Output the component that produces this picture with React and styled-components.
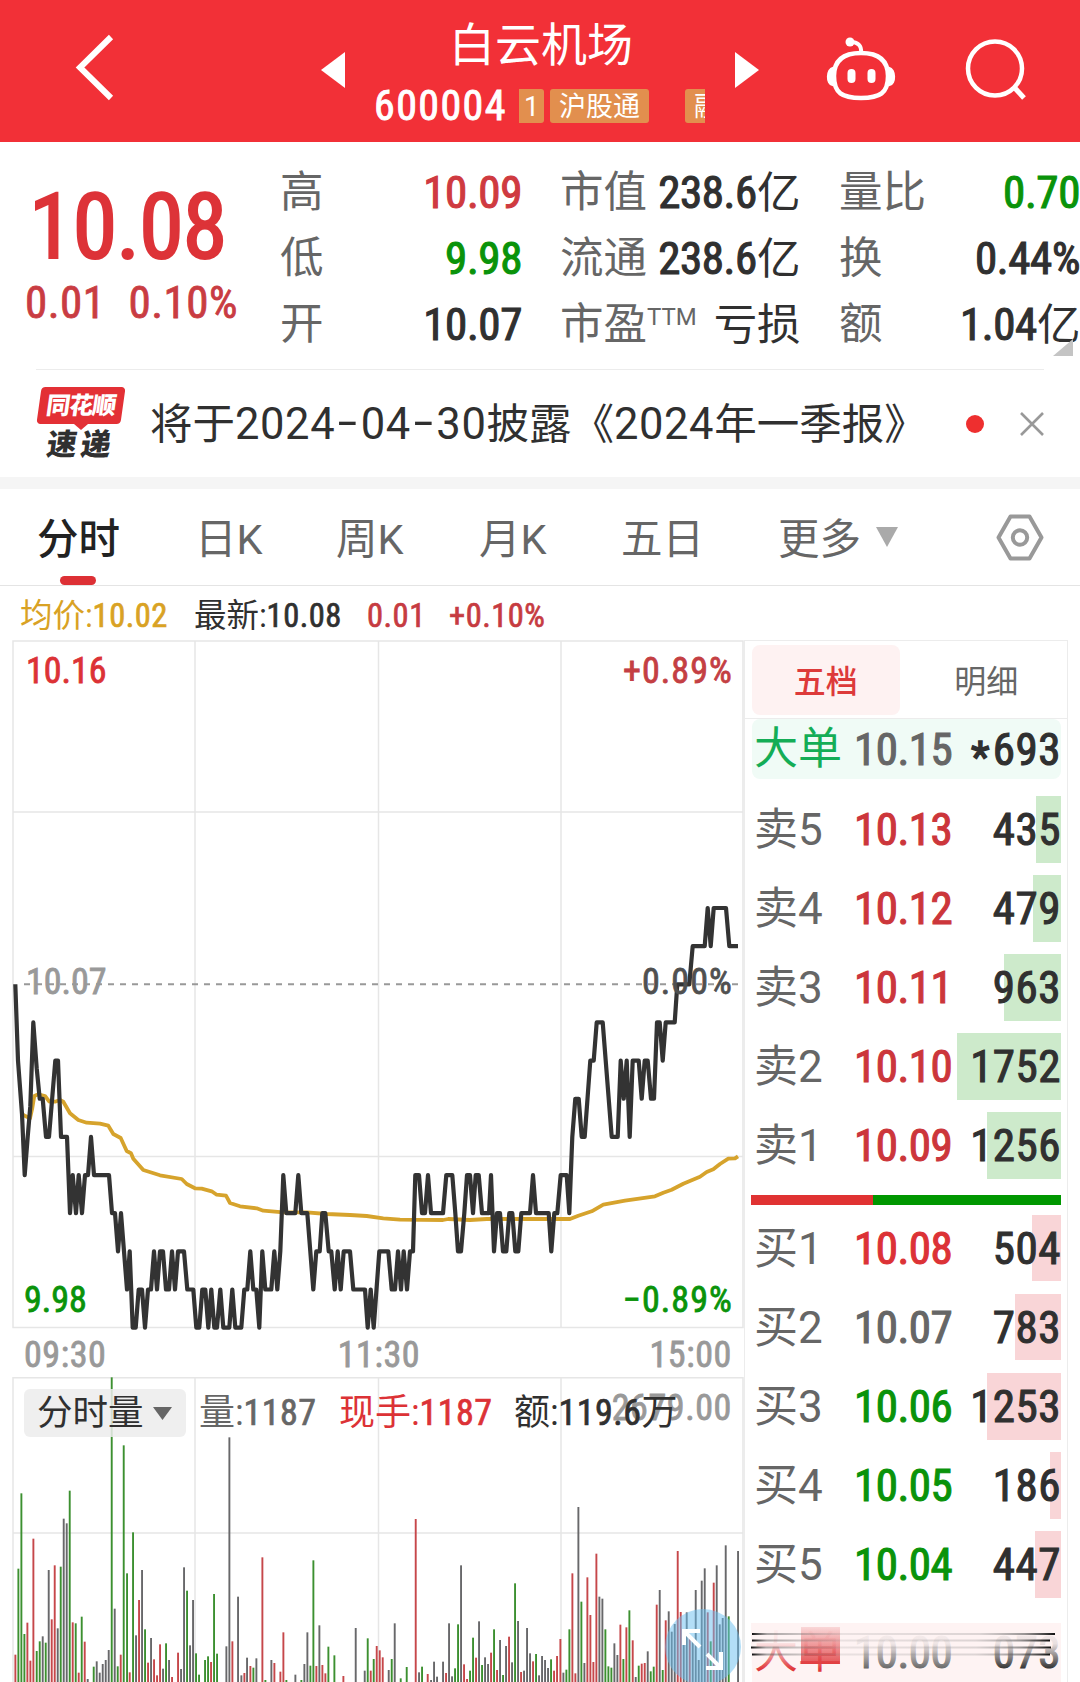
import React from 'react';
import styled, { createGlobalStyle } from 'styled-components';

const RED = '#dc3236';
const GREEN = '#0a930a';
const DARK = '#303030';
const GREY = '#666666';

const NUM = '"Roboto Condensed", "Noto Sans CJK SC", sans-serif';
const TEXT = 'Roboto, "Noto Sans CJK SC", sans-serif';

// Intraday price, [x, ticks below the previous close]
const price = [
  [15.3, 0], [18, 2], [22, 3.4], [24.7, 5], [27.7, 4], [30.3, 3.2], [33.3, 1], [36.7, 2.2],
  [39.7, 3], [42.7, 3], [46, 4], [49, 4], [55.3, 2], [58, 2], [61, 4], [67, 4], [70, 6],
  [72.7, 5], [76, 6], [78.7, 5], [82, 6], [85, 5], [88, 5], [91, 4], [94, 5], [109, 5],
  [112, 6], [115, 6], [118, 7], [121, 6], [124, 7], [127, 8], [129.7, 7], [132.7, 9],
  [135.7, 9], [138.7, 8], [142, 8], [145, 9], [148, 8], [151, 8], [154, 7], [157, 8],
  [160, 7], [163, 7], [166, 8], [169, 8], [172, 7], [175, 8], [178, 7], [184, 7], [187.3, 8],
  [193.3, 8], [196.3, 9], [199.3, 9], [202.3, 8], [205.3, 8], [208.3, 9], [211.3, 8],
  [214.3, 9], [217, 9], [220.3, 8], [223.3, 9], [229.3, 9], [232.3, 8], [235.3, 9],
  [241.3, 9], [244.3, 8], [247.3, 8], [250.3, 7], [253.3, 8], [256.3, 8], [259.3, 9],
  [262.3, 7], [265.3, 8], [271.3, 8], [274.3, 7], [277.3, 8], [280.3, 7], [283.3, 5],
  [286.3, 6], [295.3, 6], [298.3, 5], [301.3, 6], [307.3, 6], [310.3, 7], [313.3, 8],
  [316.3, 7], [319.7, 7], [322.3, 6], [325.3, 6], [328.7, 7], [331.3, 7], [334.7, 8],
  [337.7, 7], [340.7, 8], [343.7, 7], [350, 7], [353.3, 8], [365, 8], [367.7, 9],
  [370.7, 8], [373.7, 9], [376.5, 8], [379.3, 7], [388.3, 7], [391.7, 8], [395, 8],
  [398, 7], [401, 8], [403.7, 7], [407, 8], [410, 7], [413, 7], [415.3, 5], [419, 5],
  [422, 6], [425, 6], [428, 5], [431, 6], [443, 6], [446.3, 5], [452.3, 5], [455.3, 6],
  [458, 7], [461, 7], [464.3, 6], [467, 5], [470, 5], [473, 6], [475.7, 5], [478.7, 5],
  [482, 6], [489, 6], [491, 5], [494, 7], [497, 6], [500, 6], [503, 7], [506.3, 7],
  [509.3, 6], [512.3, 6], [515.3, 7], [518.3, 7], [521.3, 6], [530, 6], [533, 5], [536, 6],
  [548.7, 6], [551.3, 7], [554.3, 6], [557.3, 6], [560.7, 5], [566.7, 5], [569.3, 6],
  [572.3, 4], [575.3, 3], [578.7, 3], [581.7, 4], [584.7, 4], [590.3, 2], [593.7, 2],
  [596.7, 1], [602.7, 1], [605.7, 2], [611.7, 4], [617.7, 4], [620.7, 2], [623.7, 3],
  [626.7, 2], [629.7, 4], [632.7, 2], [638.7, 2], [641.7, 3], [644.7, 2], [647.7, 2],
  [651, 3], [654, 3], [657, 1], [659.7, 1], [662.7, 2], [665.7, 1], [674.7, 1], [677.3, 0],
  [689.3, 0], [692.7, -1], [704.7, -1], [707.7, -2], [710.7, -1], [713.7, -2], [726, -2],
  [729.3, -1], [738, -1],
];

// Average price line, page pixels
const average = [
  [22, 1114], [25.3, 1116], [30, 1118.3], [32.3, 1108], [34.3, 1096], [38.3, 1094.3],
  [45, 1096], [49.3, 1101.7], [55, 1101.7], [60, 1100], [63.3, 1101.7], [70, 1113.3],
  [78.3, 1120], [86.7, 1122.7], [100, 1123.7], [108.3, 1125.7], [113.3, 1134], [120.7, 1138],
  [126.7, 1151], [131, 1153.3], [133.3, 1158.7], [143.3, 1170], [160, 1175.3], [181.7, 1179],
  [186.7, 1184], [195, 1188.3], [201.7, 1188.7], [211.7, 1191.3], [216.7, 1194.7],
  [226, 1195.7], [230, 1203], [240, 1206.3], [256.7, 1208.3], [263.3, 1210.7], [283.3, 1212.3],
  [306.7, 1212.3], [326.7, 1214], [350, 1215], [366.7, 1216], [383.3, 1218.3], [400, 1219.7],
  [443, 1220], [448.3, 1219], [470, 1220], [486.7, 1219], [570, 1219], [578.3, 1215.7],
  [591.7, 1211.3], [603.3, 1204.7], [625, 1200.7], [655, 1196.3], [663.3, 1192.7],
  [671.7, 1189.7], [683.3, 1183.7], [700, 1176.7], [706.7, 1172], [713.3, 1169.3],
  [720, 1164], [728.3, 1158.7], [735, 1158.3], [738, 1156.3],
];

// Volume bars as "x,top,colour", in thirds of a pixel from the top of the volume area
const volume = `46,884,r 55,626,g 64,400,g 73,822,g 82,788,r 91,902,r 100,536,r 110,873,g
119,844,g 128,829,k 137,848,g 146,630,k 155,778,r 164,616,r 173,805,k 182,620,g 191,476,k
200,490,k 209,392,g 218,787,r 227,790,g 236,938,r 245,770,g 254,845,r 263,957,k 281,920,g
290,904,k 299,938,k 308,912,k 317,900,k 326,870,k 335,52,g 344,746,k 353,919,g 362,884,r
371,256,g 381,640,g 389,937,r 399,517,g 408,826,k 417,720,r 426,630,k 435,808,g 444,908,r
453,834,k 462,898,r 471,946,r 480,853,r 489,926,k 498,850,g 507,900,k 516,951,r 534,878,r
543,927,k 552,622,k 561,692,g 570,856,k 579,720,k 588,880,g 597,944,g 615,900,g 624,889,g
633,906,r 642,702,g 651,881,g 679,859,k 688,232,k 697,844,r 714,710,k 724,946,k 733,939,r
741,893,k 751,918,r 760,923,g 769,895,k 787,592,r 796,960,g 814,900,k 823,909,r 841,935,r
850,817,r 859,960,g 886,944,k 904,960,g 913,912,k 922,817,k 931,917,g 940,601,g 949,918,r
958,796,k 967,915,r 976,940,r 985,860,g 1003,886,g 1030,948,r 1067,804,k 1094,932,k
1103,835,g 1112,932,r 1121,897,g 1130,858,r 1139,871,r 1148,892,r 1166,930,k 1175,897,g
1184,790,k 1202,955,g 1220,921,g 1247,477,r 1257,937,k 1266,920,g 1283,942,r 1293,960,k
1302,905,k 1311,950,k 1329,905,k 1338,939,r 1347,790,k 1356,949,k 1365,925,g 1374,793,g
1383,616,k 1392,913,r 1401,957,r 1410,932,g 1419,833,g 1428,893,r 1437,784,k 1446,915,g
1455,892,k 1464,912,k 1473,878,r 1482,808,g 1491,930,r 1500,840,k 1509,945,g 1518,858,k
1527,830,r 1536,907,k 1545,670,g 1554,783,k 1563,936,r 1572,932,k 1581,804,k 1590,880,k
1599,904,r 1608,882,g 1617,946,k 1626,888,k 1635,900,k 1644,924,k 1653,898,g 1662,932,r
1671,888,r 1681,837,r 1690,938,k 1699,929,g 1708,808,g 1717,640,r 1726,940,r 1735,441,k
1744,725,g 1753,909,k 1762,652,r 1771,765,r 1780,906,r 1789,581,r 1798,710,k 1807,716,k
1816,808,g 1825,919,g 1834,923,g 1843,850,k 1852,885,k 1861,794,r 1870,897,g 1879,802,r
1888,751,g 1898,841,r 1907,951,k 1916,917,g 1925,911,r 1934,909,r 1943,874,k 1952,934,g
1961,920,g 1970,734,r 1979,690,k 1988,930,g 1997,781,r 2006,754,k 2015,815,k 2024,792,k
2033,573,r 2042,756,r 2051,830,k 2060,757,k 2069,832,r 2078,840,k 2087,690,k 2096,900,k
2105,662,k 2114,625,k 2123,757,r 2132,844,g 2141,668,r 2150,616,k 2159,793,k 2168,774,k
2177,556,k 2186,769,g 2214,573,k`
  .split(/\s+/)
  .map((item) => item.split(','));

const barColors = { r: '#c6474a', g: '#3c9030', k: '#68686a' };

const asks = [
  { label: '卖5', price: '10.13', qty: '435', bar: 25 },
  { label: '卖4', price: '10.12', qty: '479', bar: 28 },
  { label: '卖3', price: '10.11', qty: '963', bar: 57 },
  { label: '卖2', price: '10.10', qty: '1752', bar: 104 },
  { label: '卖1', price: '10.09', qty: '1256', bar: 74 },
];

const bids = [
  { label: '买1', price: '10.08', qty: '504', bar: 29, color: RED },
  { label: '买2', price: '10.07', qty: '783', bar: 46, color: GREY },
  { label: '买3', price: '10.06', qty: '1253', bar: 74, color: GREEN },
  { label: '买4', price: '10.05', qty: '186', bar: 11, color: GREEN },
  { label: '买5', price: '10.04', qty: '447', bar: 26, color: GREEN },
];

const yOf = (tick) => 344.3 + tick * 38.15;

const TopBar = () => (
  <Header>
    <BackButton>
      <svg width="40" height="68" viewBox="0 0 40 68" fill="none">
        <path d="M36 3 L5 33.5 L36 64" stroke="#fff" strokeWidth="6" />
      </svg>
    </BackButton>
    <Arrow viewBox="0 0 24 36">
      <path d="M24 0 V36 L0 18 Z" fill="#fff" />
    </Arrow>
    <Stock>
      <StockName>白云机场</StockName>
      <StockMeta>
        <Code>600004</Code>
        <Tag $w="25px" $radius="0 3px 3px 0">1</Tag>
        <Tag $w="99px" $radius="3px" $gap="6px">沪股通</Tag>
        <Tag $w="20px" $radius="3px 0 0 3px" $gap="36px" $cut>融</Tag>
      </StockMeta>
    </Stock>
    <Arrow viewBox="0 0 24 36">
      <path d="M0 0 V36 L24 18 Z" fill="#fff" />
    </Arrow>
    <Robot viewBox="0 0 72 66" fill="none" stroke="#fff">
      <path
        d="M36 17 C54 17 63 25 63 40 C63 57 55 62 36 62 C17 62 9 57 9 40 C9 25 18 17 36 17 Z"
        strokeWidth="4.5"
      />
      <path d="M36 17 C37 9 32 6 26 6" strokeWidth="4" />
      <circle cx="25" cy="6" r="4.5" fill="#fff" stroke="none" />
      <path d="M8 32 C2 33 1 48 8 49 Z M64 32 C70 33 71 48 64 49 Z" fill="#fff" strokeWidth="2.5" />
      <path d="M26.500 37 V43 M46.500 37 V43" strokeWidth="8" strokeLinecap="round" />
    </Robot>
    <Search viewBox="0 0 62 62" fill="none" stroke="#fff">
      <circle cx="30" cy="30.500" r="27" strokeWidth="4.5" />
      <path d="M48.500 48.500 L59 60" strokeWidth="5" />
    </Search>
  </Header>
);

const Quote = () => (
  <QuoteBox>
    <Current>
      <BigPrice>10.08</BigPrice>
      <Change>
        <span>0.01</span>
        <span>0.10%</span>
      </Change>
    </Current>
    <StatColumn $w="242px" $gap="38px">
      <Stat>高<Value $color="#cf3a40">10.09</Value></Stat>
      <Stat>低<Value $color={GREEN}>9.98</Value></Stat>
      <Stat>开<Value>10.07</Value></Stat>
    </StatColumn>
    <StatColumn $w="240px" $gap="39px">
      <Stat>市值<Value>238.6<Han>亿</Han></Value></Stat>
      <Stat>流通<Value>238.6<Han>亿</Han></Value></Stat>
      <Stat>市盈<Ttm>TTM</Ttm><Value><Han>亏损</Han></Value></Stat>
    </StatColumn>
    <StatColumn $w="241px" $gap="0px">
      <Stat>量比<Value $color={GREEN}>0.70</Value></Stat>
      <Stat>换<Value>0.44%</Value></Stat>
      <Stat>额<Value>1.04<Han>亿</Han></Value></Stat>
    </StatColumn>
    <Corner viewBox="0 0 20 17">
      <path d="M20 0 V17 H0 Z" fill="#c4c4c4" />
    </Corner>
  </QuoteBox>
);

const News = () => (
  <NewsRow>
    <Brand>
      <BrandTop>
        <span>同花顺</span>
      </BrandTop>
      <BrandTip viewBox="0 0 14 6">
        <path d="M0 0 H14 L7 6 Z" fill="#e33035" />
      </BrandTip>
      <BrandBottom>速递</BrandBottom>
    </Brand>
    <Headline>
      将于<Digits>2024<Dash>-</Dash>04<Dash>-</Dash>30</Digits>披露《<Digits>2024</Digits>年一季报》
    </Headline>
    <Dot />
    <Close viewBox="0 0 24 24">
      <path d="M1 1 L23 23 M23 1 L1 23" stroke="#999" strokeWidth="2.6" />
    </Close>
  </NewsRow>
);

const Periods = () => (
  <Tabs>
    <Tab $w="143px" $active>分时</Tab>
    <Tab $w="141px">日K</Tab>
    <Tab $w="143px">周K</Tab>
    <Tab $w="142px">月K</Tab>
    <Tab $w="157px">五日</Tab>
    <Tab $w="113px">更多</Tab>
    <Caret viewBox="0 0 22 20">
      <path d="M0 0 H22 L11 20 Z" fill="#aaa" />
    </Caret>
    <Settings viewBox="0 0 48 47" fill="none" stroke="#999" strokeWidth="4">
      <path d="M14.500 2.500 H33.500 L45.500 23.500 L33.500 44.500 H14.500 L2.500 23.500 Z" strokeLinejoin="round" />
      <circle cx="24" cy="23.500" r="7.200" />
    </Settings>
  </Tabs>
);

const PriceChart = () => (
  <ChartSvg width="744" height="737" viewBox="0 0 744 737">
    <path
      d="M13 1 H743 V687.500 H13 Z M195 1 V687.500 M378.500 1 V687.500 M561 1 V687.500 M13 172 H743 M13 516.500 H743"
      fill="none"
      stroke="#e6e6e6"
      strokeWidth="1.5"
    />
    <path d="M24 344.300 H738" stroke="#999" strokeWidth="2" strokeDasharray="6 6" />
    <ChartText x="26" y="353.500" $color="#999">10.07</ChartText>
    <polyline
      points={average.map(([x, y]) => `${x},${y - 640}`).join(' ')}
      fill="none"
      stroke="#d6a32c"
      strokeWidth="3.8"
      strokeLinejoin="round"
    />
    <polyline
      points={price.map(([x, t]) => `${x},${yOf(t)}`).join(' ')}
      fill="none"
      stroke="#333"
      strokeWidth="4.2"
      strokeLinejoin="round"
    />
    <ChartText x="26" y="43" $color={RED}>10.16</ChartText>
    <ChartText x="733" y="43" $color="#c43f43" $spacing="1.1px" textAnchor="end">+0.89%</ChartText>
    <ChartText x="733" y="353.500" $color="#505050" $spacing="1.1px" textAnchor="end">0.00%</ChartText>
    <ChartText x="24" y="671.500" $color={GREEN}>9.98</ChartText>
    <ChartText x="733" y="671.500" $color={GREEN} $spacing="1.1px" textAnchor="end">−0.89%</ChartText>
    <ChartText x="24" y="726.500" $color="#999" $spacing="0.6px">09:30</ChartText>
    <ChartText x="379" y="726.500" $color="#999" $spacing="0.6px" textAnchor="middle">11:30</ChartText>
    <ChartText x="732" y="726.500" $color="#999" $spacing="0.6px" textAnchor="end">15:00</ChartText>
  </ChartSvg>
);

const VolumeChart = () => (
  <VolumeArea>
    <ChartSvg width="744" height="305" viewBox="0 1377 744 305">
      <path
        d="M13 1682 V1377.800 H743 V1682 M195 1377.500 V1682 M378.500 1377.500 V1682 M561 1377.500 V1682 M13 1533 H743"
        fill="none"
        stroke="#e6e6e6"
        strokeWidth="1.5"
      />
      {volume.map(([x, top, c]) => (
        <rect
          key={x}
          x={x / 3 - 0.9}
          y={1360 + top / 3}
          width="1.9"
          height={322 - top / 3}
          fill={barColors[c]}
        />
      ))}
      <ChartText x="732" y="1420" $color="#999" $spacing="0.6px" textAnchor="end">2679.00</ChartText>
    </ChartSvg>
    <VolumeLegend>
      <Picker>
        分时量
        <svg width="19" height="13" viewBox="0 0 19 13">
          <path d="M0 0 H19 L9.500 13 Z" fill="#666" />
        </svg>
      </Picker>
      <Item $w="140px" $color={GREY}>量:<b>1187</b></Item>
      <Item $w="175px" $color={RED}>现手:<b>1187</b></Item>
      <Item $w="170px" $color={DARK}>额:<b>119.6</b>万</Item>
    </VolumeLegend>
    <Expand viewBox="0 0 76 76" fill="none" stroke="#fff" strokeWidth="4">
      <circle cx="38" cy="38" r="38" fill="rgba(104, 190, 240, 0.5)" stroke="none" />
      <path d="M19 36 V22 H35 M20 23 L35 38" />
      <path d="M41 59 H56 V43 M55 58 L42 45" />
    </Expand>
  </VolumeArea>
);

const Level = ({ row, color, tint }) => (
  <LevelRow>
    <LevelBar $tint={tint} style={{ width: row.bar }} />
    <LevelLabel>{row.label}</LevelLabel>
    <LevelPrice $color={color}>{row.price}</LevelPrice>
    <LevelQty>{row.qty}</LevelQty>
  </LevelRow>
);

const OrderBook = () => (
  <Book>
    <BookTabs>
      <BookTab $active>五档</BookTab>
      <BookTab>明细</BookTab>
    </BookTabs>
    <BigOrder>
      <LevelLabel $color="#14ad56">大单</LevelLabel>
      <LevelPrice $color={GREY}>10.15</LevelPrice>
      <LevelQty><Star>*</Star>693</LevelQty>
    </BigOrder>
    <Levels>
      {asks.map((row) => (
        <Level key={row.label} row={row} color="#cc363b" tint="#cdeacb" />
      ))}
    </Levels>
    <Ratio>
      <RatioPart $w="122px" $color="#e03232" />
      <RatioPart $w="188px" $color="#009700" />
    </Ratio>
    <Levels>
      {bids.map((row) => (
        <Level key={row.label} row={row} color={row.color} tint="#f9d5d7" />
      ))}
    </Levels>
    <BottomOrder>
      <LevelLabel $color="#e0393c">大单</LevelLabel>
      <LevelPrice $color={GREY}>10.00</LevelPrice>
      <LevelQty>073</LevelQty>
      <Streaks viewBox="0 0 310 46">
        <defs>
          <linearGradient id="veil" x1="0" y1="0" x2="0" y2="1">
            <stop offset="0" stopColor="#fef3f3" />
            <stop offset="0.45" stopColor="#fef3f3" stopOpacity="0.9" />
            <stop offset="1" stopColor="#fef3f3" stopOpacity="0" />
          </linearGradient>
          <linearGradient id="block" x1="0" y1="0" x2="0" y2="1">
            <stop offset="0" stopColor="#e0393c" stopOpacity="0.15" />
            <stop offset="1" stopColor="#e0393c" stopOpacity="0.85" />
          </linearGradient>
          <linearGradient id="streak">
            <stop offset="0" stopColor="#111" />
            <stop offset="0.05" stopColor="#555" stopOpacity="0.5" />
            <stop offset="0.3" stopColor="#777" stopOpacity="0.15" />
            <stop offset="0.75" stopColor="#777" stopOpacity="0.25" />
            <stop offset="0.9" stopColor="#555" stopOpacity="0.6" />
            <stop offset="1" stopColor="#111" />
          </linearGradient>
        </defs>
        <rect width="310" height="46" fill="url(#veil)" />
        <rect x="50" y="4" width="39" height="37" fill="url(#block)" />
        <rect x="1" y="10" width="303" height="2" fill="url(#streak)" />
        <rect x="1" y="16.500" width="298" height="2" fill="url(#streak)" />
        <rect x="0" y="23.500" width="300" height="2" fill="url(#streak)" />
        <rect x="1" y="30.500" width="298" height="2" fill="url(#streak)" />
      </Streaks>
    </BottomOrder>
  </Book>
);

const App = () => {
  return (
    <Page>
      <GlobalStyle />
      <TopBar />
      <Quote />
      <News />
      <Periods />
      <Legend>
        <Item $w="174px" $color="#d9a224">均价:<b>10.02</b></Item>
        <Item $w="173px" $color={DARK}>最新:<b>10.08</b></Item>
        <Item $w="82px" $color="#c63b41"><b>0.01</b></Item>
        <Item $w="110px" $color="#c63b41"><b>+0.10%</b></Item>
      </Legend>
      <Board>
        <Charts>
          <PriceChart />
          <VolumeChart />
        </Charts>
        <OrderBook />
      </Board>
    </Page>
  );
};

// Styled Components
const GlobalStyle = createGlobalStyle`
  * {
    box-sizing: border-box;
  }
  body {
    margin: 0;
    background: #fff;
  }
  svg {
    display: block;
    flex-shrink: 0;
  }
`;

const Page = styled.div`
  width: 1080px;
  height: 1682px;
  overflow: hidden;
  background: #fff;
  color: ${DARK};
  font-family: ${TEXT};
  white-space: nowrap;
`;

const Header = styled.header`
  display: flex;
  height: 142px;
  background: #f23037;
  color: #fff;
`;

const BackButton = styled.div`
  width: 321px;
  padding: 34px 0 0 75px;
`;

const Arrow = styled.svg`
  width: 24px;
  height: 36px;
  margin-top: 52px;
`;

const Stock = styled.div`
  width: 390px;
  padding-top: 14px;
`;

const StockName = styled.div`
  height: 60px;
  padding-left: 2px;
  font-size: 46px;
  line-height: 62px;
  text-align: center;
`;

const StockMeta = styled.div`
  display: flex;
  align-items: center;
  height: 34px;
  margin-top: 15px;
  padding-left: 29px;
`;

const Code = styled.div`
  width: 145px;
  font-family: ${NUM};
  font-size: 42px;
  font-weight: 400;
  line-height: 36px;
  letter-spacing: 1.4px;
  -webkit-text-stroke: 0.9px;
`;

const Tag = styled.div`
  width: ${(p) => p.$w};
  height: 34px;
  margin-left: ${(p) => p.$gap || 0};
  padding-left: ${(p) => (p.$cut ? '9px' : 0)};
  border-radius: ${(p) => p.$radius};
  background: #e28f4e;
  overflow: hidden;
  font-size: 27px;
  line-height: 36px;
  text-align: ${(p) => (p.$cut ? 'left' : 'center')};
`;

const Robot = styled.svg`
  width: 72px;
  height: 66px;
  margin: 36px 0 0 66px;
`;

const Search = styled.svg`
  width: 62px;
  height: 62px;
  margin: 38px 0 0 68px;
`;

const QuoteBox = styled.section`
  position: relative;
  display: flex;
  height: 227px;
  padding-top: 17px;
`;

const Current = styled.div`
  width: 280px;
  padding: 16px 0 0 25px;
  color: #dd3338;
  font-family: ${NUM};
`;

const BigPrice = styled.div`
  padding-left: 4px;
  font-size: 90px;
  font-weight: 400;
  line-height: 105px;
  letter-spacing: -0.8px;
  -webkit-text-stroke: 2.2px;
`;

const Change = styled.div`
  display: flex;
  gap: 23px;
  color: #c93c42;
  font-size: 45px;
  line-height: 46px;
  letter-spacing: 0.5px;
  -webkit-text-stroke: 0.8px;
`;

const StatColumn = styled.div`
  width: ${(p) => p.$w};
  margin-right: ${(p) => p.$gap};
`;

const Stat = styled.div`
  display: flex;
  height: 66px;
  color: ${GREY};
  font-size: 43.5px;
  line-height: 68px;
`;

const Value = styled.span`
  margin-left: auto;
  color: ${(p) => p.$color || DARK};
  font-family: ${NUM};
  font-size: 45px;
  font-weight: 400;
  line-height: 67px;
  letter-spacing: -0.4px;
  -webkit-text-stroke: 1.1px;
`;

const Han = styled.span`
  font-size: 43.5px;
  -webkit-text-stroke: 0;
`;

const Ttm = styled.span`
  font-size: 24px;
  line-height: 52px;
`;

const Corner = styled.svg`
  position: absolute;
  left: 1053px;
  bottom: 13px;
  width: 20px;
  height: 17px;
`;

const NewsRow = styled.section`
  display: flex;
  align-items: center;
  height: 108px;
  margin-left: 36px;
  margin-right: 36px;
  border-top: 1.5px solid #ececec;
`;

const Brand = styled.div`
  display: flex;
  flex-direction: column;
  align-items: center;
  width: 114px;
  padding-right: 25px;
  height: 73px;
`;

const BrandTop = styled.div`
  width: 84px;
  height: 37px;
  border-radius: 4px;
  background: #e33035;
  color: #fff;
  font-size: 24px;
  font-weight: 900;
  line-height: 38px;
  text-align: center;
  transform: skewX(-8deg);

  span {
    letter-spacing: -1px;
  }
`;

const BrandTip = styled.svg`
  width: 14px;
  height: 6px;
`;

const BrandBottom = styled.div`
  font-size: 30px;
  font-weight: 900;
  line-height: 29px;
  letter-spacing: 4px;
  transform: skewX(-8deg);
`;

const Headline = styled.div`
  width: 816px;
  font-size: 42.5px;
  line-height: 60px;
  padding-top: 3px;
`;

const Digits = styled.span`
  font-size: 43.5px;
  letter-spacing: 0.6px;
`;

const Dash = styled.span`
  display: inline-block;
  width: 25.5px;
  text-align: center;
  transform: translateY(-2px) scaleX(1.6);
`;

const Dot = styled.div`
  width: 18px;
  height: 18px;
  border-radius: 50%;
  background: #ee2f2f;
`;

const Close = styled.svg`
  width: 24px;
  height: 24px;
  margin-left: 36px;
`;

const Tabs = styled.nav`
  display: flex;
  align-items: center;
  height: 109px;
  padding-left: 37px;
  border-top: 12px solid #f5f5f5;
  border-bottom: 1.5px solid #e4e4e4;
`;

const Tab = styled.div`
  position: relative;
  width: ${(p) => p.$w};
  height: 96px;
  padding-left: ${(p) => (p.$active ? 0 : '15px')};
  color: ${(p) => (p.$active ? '#222' : GREY)};
  font-size: 41.5px;
  font-weight: ${(p) => (p.$active ? 500 : 400)};
  line-height: 102px;

  &::after {
    content: '';
    display: ${(p) => (p.$active ? 'block' : 'none')};
    position: absolute;
    left: 23px;
    bottom: 0;
    width: 36px;
    height: 9px;
    border-radius: 5px;
    background: #dd3035;
  }
`;

const Caret = styled.svg`
  width: 22px;
  height: 20px;
`;

const Settings = styled.svg`
  width: 48px;
  height: 47px;
  margin-left: auto;
  margin-right: 36px;
`;

const Legend = styled.div`
  display: flex;
  align-items: center;
  height: 54px;
  padding: 6px 0 0 20px;
  font-size: 32.5px;
`;

const Item = styled.div`
  width: ${(p) => p.$w};
  height: 40px;
  color: ${(p) => p.$color};
  font-family: ${NUM};
  font-weight: 400;
  line-height: 40px;

  b {
    font-weight: 400;
    letter-spacing: 0.5px;
    -webkit-text-stroke: 0.7px;
  }
`;

const Board = styled.div`
  display: flex;
  height: 1042px;
`;

const Charts = styled.div`
  width: 744px;
`;

const ChartSvg = styled.svg`
  overflow: hidden;
`;

const ChartText = styled.text`
  font-family: ${NUM};
  font-size: 36px;
  letter-spacing: ${(p) => p.$spacing || 0};
  fill: ${(p) => p.$color};
  stroke: ${(p) => p.$color};
  stroke-width: 0.8px;
`;

const VolumeArea = styled.div`
  position: relative;
`;

const VolumeLegend = styled.div`
  position: absolute;
  left: 24px;
  top: 12px;
  display: flex;
  align-items: center;
  height: 48px;
  font-size: 36px;
`;

const Picker = styled.div`
  display: flex;
  align-items: center;
  gap: 9px;
  width: 162px;
  height: 48px;
  margin-right: 13px;
  padding-left: 13px;
  border-radius: 6px;
  background: rgba(236, 236, 236, 0.85);
  font-size: 35.5px;
  line-height: 48px;
`;

const Expand = styled.svg`
  position: absolute;
  left: 665px;
  top: 232px;
  width: 76px;
  height: 76px;
`;

const Book = styled.aside`
  width: 324px;
  padding: 4px 6px 0 7px;
  border: 1.5px solid #ececec;
  border-bottom: none;
  overflow: hidden;
`;

const BookTabs = styled.div`
  display: flex;
  height: 74px;
  margin: 0 -6px 0 -7px;
  padding-left: 7px;
  border-bottom: 1.5px solid #ececec;
`;

const BookTab = styled.div`
  width: ${(p) => (p.$active ? '148px' : '168px')};
  height: 70px;
  padding-left: ${(p) => (p.$active ? 0 : '6px')};
  border-radius: 8px;
  background: ${(p) => (p.$active ? '#fef2f2' : 'transparent')};
  color: ${(p) => (p.$active ? '#dd3a3a' : GREY)};
  font-size: 32px;
  font-weight: ${(p) => (p.$active ? 500 : 400)};
  line-height: 75px;
  text-align: center;
`;

const LevelRow = styled.div`
  position: relative;
  display: flex;
  height: 66.5px;
  padding: 0 0 0 2px;
  line-height: 68px;
`;

const BigOrder = styled(LevelRow)`
  height: 60px;
  border-radius: 8px;
  background: #f0fbf6;
  line-height: 61px;
`;

const LevelBar = styled.div`
  position: absolute;
  top: 0;
  right: 0;
  height: 100%;
  background: ${(p) => p.$tint};
`;

const LevelLabel = styled.div`
  width: 100px;
  color: ${(p) => p.$color || GREY};
  font-size: 44px;
`;

const LevelPrice = styled.div`
  color: ${(p) => p.$color};
  font-family: ${NUM};
  font-size: 45px;
  letter-spacing: -0.5px;
  -webkit-text-stroke: 1.1px;
`;

const LevelQty = styled.div`
  position: relative;
  margin-left: auto;
  font-family: ${NUM};
  font-size: 45px;
  letter-spacing: 0.5px;
  -webkit-text-stroke: 1.1px;
`;

const Star = styled.span`
  display: inline-block;
  margin-right: 3px;
  font-size: 42px;
  line-height: 40px;
  transform: translateY(6px);
  -webkit-text-stroke: 1.6px;
`;

const Levels = styled.div`
  display: flex;
  flex-direction: column;
  gap: 12.6px;
  margin-top: 17px;
`;

const Ratio = styled.div`
  display: flex;
  height: 10px;
  margin: 16px 0 -7px -1px;
`;

const RatioPart = styled.div`
  width: ${(p) => p.$w};
  background: ${(p) => p.$color};
`;

const BottomOrder = styled(LevelRow)`
  height: 70px;
  margin-top: 25px;
  border-radius: 8px 8px 0 0;
  background: #fef3f3;
  line-height: 60px;
`;

const Streaks = styled.svg`
  position: absolute;
  left: -1px;
  top: 0;
  width: 310px;
  height: 46px;
`;

export default App;
